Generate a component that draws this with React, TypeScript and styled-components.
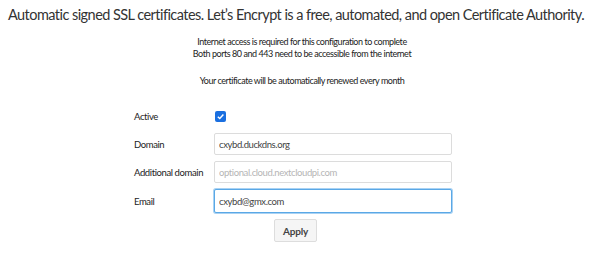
import React from "react";
import styled, { createGlobalStyle } from "styled-components";

const Global = createGlobalStyle`
  html, body { margin: 0; padding: 0; background: #fff; }
  body { font-family: Lato, "Liberation Sans", sans-serif; color: #333; }
`;

const Page = styled.div`
  width: 604px;
  height: 269px;
  display: flex;
  flex-direction: column;
  align-items: center;
  overflow: hidden;
`;

const Header = styled.div`
  height: 30px;
  display: flex;
  align-items: center;
  justify-content: center;
`;

const Title = styled.h1`
  margin: 0;
  font-size: 14.5px;
  letter-spacing: -0.55px;
  font-weight: 400;
  line-height: 20px;
  color: #333;
  white-space: nowrap;
  transform: translateX(-6px);
`;

const Note = styled.p<{ $gap?: number }>`
  margin: ${(p) => p.$gap ?? 0}px 0 0;
  font-size: 9px;
  letter-spacing: -0.45px;
  line-height: 12px;
  height: 12px;
  color: #222;
  text-align: center;
`;

const Form = styled.div`
  margin-top: 18px;
  align-self: flex-start;
  margin-left: 134px;
  display: grid;
  grid-template-columns: 80px 238px;
  row-gap: 6px;
  align-items: center;
`;

const Label = styled.label`
  font-size: 9.5px;
  letter-spacing: -0.4px;
  color: #222;
`;

const Check = styled.span`
  width: 11px;
  height: 11px;
  border-radius: 2px;
  background: #1a6fe0;
  display: flex;
  align-items: center;
  justify-content: center;
  margin-left: 1px;
`;

const Field = styled.input<{ $focus?: boolean }>`
  box-sizing: border-box;
  width: 238px;
  height: ${(p) => (p.$focus ? 24 : 22)}px;
  border: 1px solid ${(p) => (p.$focus ? "#5aa8e6" : "#dcdcdc")};
  box-shadow: ${(p) => (p.$focus ? "0 0 0 1px #a9d2f3" : "none")};
  border-radius: 2px;
  padding: 0 4px;
  font-family: Lato, "Liberation Sans", sans-serif;
  font-size: 9.5px;
  letter-spacing: -0.4px;
  color: #444;
  outline: none;
  &::placeholder { color: #b5b5b5; }
`;

const Actions = styled.div`
  grid-column: 1 / span 2;
  display: flex;
  justify-content: flex-start;
  padding-left: 140px;
`;

const Button = styled.button`
  width: 43px;
  height: 23px;
  border: 1px solid #ddd;
  border-radius: 2px;
  background: #f5f5f5;
  font-family: Lato, "Liberation Sans", sans-serif;
  font-size: 10px;
  font-weight: 700;
  letter-spacing: -0.2px;
  color: #444;
  padding: 0;
`;

const CheckRow = styled.div`
  height: 22px;
  display: flex;
  align-items: center;
`;

export default function App() {
  return (
    <Page>
      <Global />
      <Header>
        <Title>
          Automatic signed SSL certificates. Let’s Encrypt is a free, automated, and open Certificate Authority.
        </Title>
      </Header>
      <Note $gap={6}>Internet access is required for this configuration to complete</Note>
      <Note>Both ports 80 and 443 need to be accessible from the internet</Note>
      <Note $gap={15}>Your certificate will be automatically renewed every month</Note>
      <Form>
        <Label>Active</Label>
        <CheckRow>
          <Check>
            <svg width="9" height="9" viewBox="0 0 10 10">
              <path d="M2 5.2 L4.2 7.3 L8.2 2.8" stroke="#fff" strokeWidth="1.6" fill="none" />
            </svg>
          </Check>
        </CheckRow>
        <Label>Domain</Label>
        <Field defaultValue="cxybd.duckdns.org" />
        <Label>Additional domain</Label>
        <Field placeholder="optional.cloud.nextcloudpi.com" />
        <Label>Email</Label>
        <Field $focus defaultValue="cxybd@gmx.com" />
        <Actions>
          <Button>Apply</Button>
        </Actions>
      </Form>
    </Page>
  );
}
